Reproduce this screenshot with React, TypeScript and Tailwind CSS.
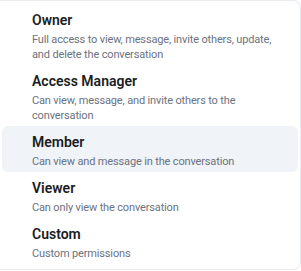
import React from "react";

const items = [
  { title: "Owner", desc: "Full access to view, message, invite others, update, and delete the conversation" },
  { title: "Access Manager", desc: "Can view, message, and invite others to the conversation" },
  { title: "Member", desc: "Can view and message in the conversation", active: true },
  { title: "Viewer", desc: "Can only view the conversation" },
  { title: "Custom", desc: "Custom permissions" },
];

export default function App() {
  return (
    <div className="w-[301px] h-[271px] bg-white overflow-hidden" style={{ fontFamily: 'Roboto, "Noto Sans", sans-serif' }}>
      <div className="w-[301px] h-[270px] rounded-r-lg border-y border-r border-[#e8ebef] px-[2px] pt-[3px] flex flex-col">
        {items.map((it) => (
          <div
            key={it.title}
            className={`rounded-md pl-[30px] pr-3 pt-[6px] pb-[3px] ${it.active ? "bg-[#f0f3f8]" : ""}`}
          >
            <div className="text-[14px] leading-[20px] font-semibold text-[#1a1d23]">{it.title}</div>
            <div className="mt-[2px] text-[11px] leading-[15px] tracking-[-0.15px] text-[#6b7280] max-w-[250px]">{it.desc}</div>
          </div>
        ))}
      </div>
    </div>
  );
}
